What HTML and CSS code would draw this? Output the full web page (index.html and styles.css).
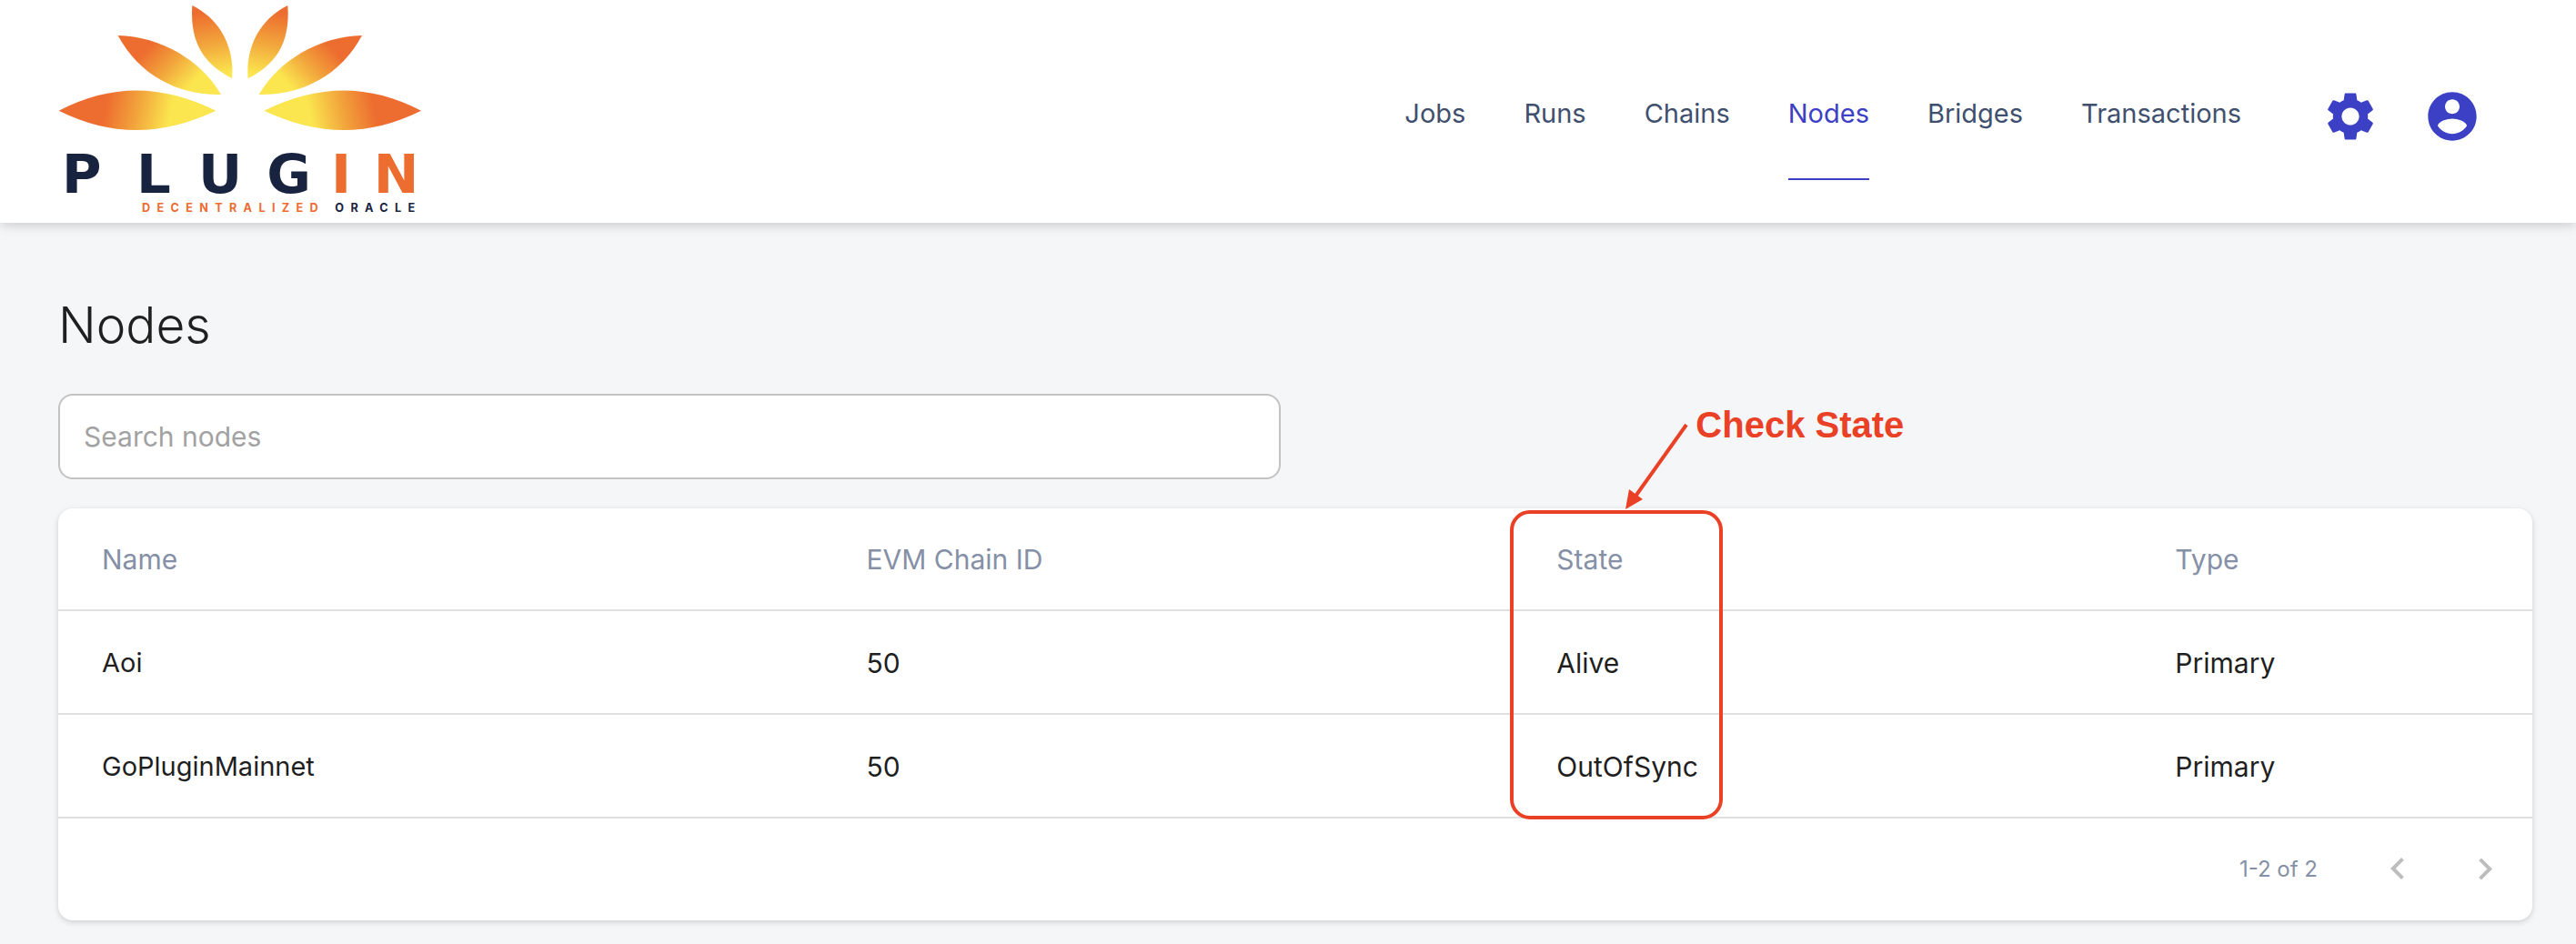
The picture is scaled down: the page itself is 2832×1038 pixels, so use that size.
FILE: index.html
```html
<!DOCTYPE html>
<html lang="en">
<head>
<meta charset="utf-8">
<meta name="viewport" content="width=device-width, initial-scale=1">
<title>Nodes - Plugin Decentralized Oracle</title>
<link rel="stylesheet" href="styles.css">
</head>
<body>
<header class="header">
  <a class="logo" href="#" aria-label="Plugin Decentralized Oracle">
    <svg class="logo__art" viewBox="72 0 1200 714">
      <defs>
        <linearGradient id="petal-low" gradientUnits="userSpaceOnUse" x1="230" y1="340" x2="440" y2="385">
          <stop offset="0" stop-color="#ed6c2f"/><stop offset="0.5" stop-color="#f2a53c"/><stop offset="1" stop-color="#fbe64f"/>
        </linearGradient>
        <linearGradient id="petal-mid" gradientUnits="userSpaceOnUse" x1="365" y1="160" x2="500" y2="290">
          <stop offset="0" stop-color="#ed6c2f"/><stop offset="0.5" stop-color="#f2a53c"/><stop offset="1" stop-color="#fbe64f"/>
        </linearGradient>
        <linearGradient id="petal-top" gradientUnits="userSpaceOnUse" x1="550" y1="40" x2="590" y2="250">
          <stop offset="0" stop-color="#ed6c2f"/><stop offset="0.5" stop-color="#f2a53c"/><stop offset="1" stop-color="#fbe64f"/>
        </linearGradient>
        <g id="petals">
          <path fill="url(#petal-low)" d="M74 365C245 276 412 276 592 365C412 450 245 450 74 365Z"/>
          <path fill="url(#petal-mid)" d="M269 117C410 120 545 200 609 312C470 315 340 250 269 117Z"/>
          <path fill="url(#petal-top)" d="M514 18C600 60 655 150 645 259C560 215 505 150 514 18Z"/>
        </g>
      </defs>
      <use href="#petals"/>
      <use href="#petals" transform="translate(1343 0) scale(-1 1)"/>
      <text class="logo__word" y="635"><tspan x="84 330 534 760">PLUG</tspan><tspan class="logo__accent" x="972 1112">IN</tspan></text>
      <text class="logo__tagline" y="699"><tspan class="logo__accent" x="348">DECENTRALIZED</tspan><tspan x="985">ORACLE</tspan></text>
    </svg>
  </a>
  <nav class="nav" aria-label="Main">
    <a class="nav__link" href="#">Jobs</a>
    <a class="nav__link" href="#">Runs</a>
    <a class="nav__link" href="#">Chains</a>
    <a class="nav__link nav__link--active" href="#" aria-current="page">Nodes</a>
    <a class="nav__link" href="#">Bridges</a>
    <a class="nav__link" href="#">Transactions</a>
  </nav>
  <div class="actions">
    <button class="icon-button" type="button" aria-label="Settings">
      <svg class="icon" viewBox="0 0 24 24"><path d="M19.14 12.94c.04-.3.06-.61.06-.94 0-.32-.02-.64-.07-.94l2.03-1.58c.18-.14.23-.41.12-.61l-1.92-3.32c-.12-.22-.37-.29-.59-.22l-2.39.96c-.5-.38-1.03-.7-1.62-.94l-.36-2.54c-.04-.24-.24-.41-.48-.41h-3.84c-.24 0-.43.17-.47.41l-.36 2.54c-.59.24-1.13.57-1.62.94l-2.39-.96c-.22-.08-.47 0-.59.22L2.74 8.87c-.12.21-.08.47.12.61l2.03 1.58c-.05.3-.09.63-.09.94s.02.64.07.94l-2.03 1.58c-.18.14-.23.41-.12.61l1.92 3.32c.12.22.37.29.59.22l2.39-.96c.5.38 1.03.7 1.62.94l.36 2.54c.05.24.24.41.48.41h3.84c.24 0 .44-.17.47-.41l.36-2.54c.59-.24 1.13-.56 1.62-.94l2.39.96c.22.08.47 0 .59-.22l1.92-3.32c.12-.22.07-.47-.12-.61l-2.01-1.58zM12 15.6c-1.98 0-3.6-1.62-3.6-3.6s1.62-3.6 3.6-3.6 3.6 1.62 3.6 3.6-1.62 3.6-3.6 3.6z"/></svg>
    </button>
    <button class="icon-button" type="button" aria-label="Account">
      <svg class="icon" viewBox="0 0 24 24"><path d="M12 2C6.48 2 2 6.48 2 12s4.48 10 10 10 10-4.48 10-10S17.52 2 12 2zm0 3c1.66 0 3 1.34 3 3s-1.34 3-3 3-3-1.34-3-3 1.34-3 3-3zm0 14.2c-2.5 0-4.71-1.28-6-3.22.03-1.99 4-3.08 6-3.08 1.99 0 5.97 1.09 6 3.08-1.29 1.94-3.5 3.22-6 3.22z"/></svg>
    </button>
  </div>
</header>

<main class="content">
  <h1 class="title">Nodes</h1>
  <input class="search" type="search" placeholder="Search nodes" aria-label="Search nodes">
  <section class="card">
    <table class="table">
      <colgroup><col class="col-name"><col class="col-chain"><col class="col-state"><col></colgroup>
      <thead>
        <tr>
          <th scope="col">Name</th>
          <th scope="col">EVM Chain ID</th>
          <th scope="col" class="state">State
            <div class="callout">
              <svg class="callout__arrow" viewBox="0 0 72 96" aria-hidden="true"><path d="M68 2L11 82" fill="none" stroke="#ea4025" stroke-width="4"/><path d="M1 95L5 73L20 84Z" fill="#ea4025"/></svg>
              <span class="callout__label">Check State</span>
            </div>
          </th>
          <th scope="col">Type</th>
        </tr>
      </thead>
      <tbody>
        <tr>
          <td><a class="node-link" href="#">Aoi</a></td>
          <td>50</td>
          <td>Alive</td>
          <td>Primary</td>
        </tr>
        <tr>
          <td><a class="node-link" href="#">GoPluginMainnet</a></td>
          <td>50</td>
          <td>OutOfSync</td>
          <td>Primary</td>
        </tr>
      </tbody>
    </table>
    <footer class="pagination">
      <span class="pagination__range">1-2 of 2</span>
      <button class="page-button" type="button" aria-label="Previous page" disabled>
        <svg class="page-button__icon" viewBox="0 0 24 24"><path d="M15.41 16.09l-4.58-4.59 4.58-4.59L14 5.5l-6 6 6 6z"/></svg>
      </button>
      <button class="page-button" type="button" aria-label="Next page" disabled>
        <svg class="page-button__icon" viewBox="0 0 24 24"><path d="M8.59 16.34l4.58-4.59-4.58-4.59L10 5.75l6 6-6 6z"/></svg>
      </button>
    </footer>
  </section>
</main>
</body>
</html>
```
FILE: styles.css
```css
* {
  box-sizing: border-box;
}

body {
  margin: 0;
  background: #f5f6f8;
  color: #1f1f1f;
  font-family: Inter, "Liberation Sans", sans-serif;
  font-size: 30px;
  line-height: 48px;
}

a {
  color: inherit;
  text-decoration: none;
}

button {
  border: 0;
  background: none;
  cursor: pointer;
}

/* Header */

.header {
  position: relative;
  display: flex;
  align-items: center;
  padding: 0 80px 0 64px;
  background: #fff;
  box-shadow: 0 4px 8px -2px rgba(0, 0, 0, 0.08), 0 6px 12px rgba(0, 0, 0, 0.06), 0 2px 20px rgba(0, 0, 0, 0.04);
}

.logo {
  margin-right: auto;
  padding-bottom: 7px;
}

.logo__art {
  display: block;
  width: 400px;
}

.logo__word {
  fill: #18233f;
  font-family: "DejaVu Sans", sans-serif;
  font-size: 178px;
  font-weight: 700;
}

.logo__tagline {
  fill: #18233f;
  font-size: 38px;
  font-weight: 700;
  letter-spacing: 22px;
}

.logo__accent {
  fill: #ed6c2f;
}

.nav {
  display: flex;
  gap: 64px;
  padding-top: 5px;
  margin-right: 64px;
  color: #3f506f;
  font-size: 29px;
}

.nav__link {
  padding: 49px 0 47px;
  border-bottom: 2px solid transparent;
}

.nav__link--active {
  border-color: #3c40c4;
  color: #3c40c4;
}

.actions {
  display: flex;
  padding-top: 10px;
}

.icon-button {
  padding: 24px;
}

.icon {
  display: block;
  width: 64px;
  height: 64px;
  fill: #3c40c4;
}

/* Page */

.content {
  padding: 64px 48px 28px 64px;
}

.title {
  margin: 12px 0 40px;
  font-size: 55px;
  font-weight: 300;
  line-height: 72px;
}

.search {
  display: block;
  width: calc(50% - 16px);
  height: 94px;
  margin-bottom: 32px;
  padding: 0 26px;
  border: 2px solid #c2c2c2;
  border-radius: 16px;
  background: #fff;
  font: inherit;
}

.search::placeholder {
  color: #a2a2a2;
}

.card {
  border-radius: 16px;
  background: #fff;
  box-shadow: 0 2px 6px rgba(0, 0, 0, 0.16);
}

/* Table */

.table {
  width: 100%;
  border-collapse: separate;
  border-spacing: 0;
  table-layout: fixed;
}

.col-name {
  width: 30.9%;
}

.col-chain {
  width: 27.9%;
}

.col-state {
  width: 25%;
}

.table th,
.table td {
  padding: 32px 24px 31px 48px;
  border-bottom: 2px solid #dfdfdf;
  text-align: left;
}

.table th {
  color: #8590a6;
  font-weight: 400;
}

.node-link {
  font-size: 29px;
}

/* Marked column */

.state {
  position: relative;
}

.callout {
  position: absolute;
  top: 2px;
  left: -3px;
  width: 234px;
  height: 340px;
  border: 4px solid #ea4025;
  border-radius: 22px;
  pointer-events: none;
}

.callout__arrow {
  position: absolute;
  left: 122px;
  bottom: 100%;
  width: 72px;
  height: 96px;
  margin-bottom: 4px;
}

.callout__label {
  position: absolute;
  left: 200px;
  bottom: 100%;
  padding-bottom: 74px;
  color: #ea4025;
  font: 700 40px/48px "Liberation Sans", Arial, sans-serif;
  white-space: nowrap;
}

/* Pagination */

.pagination {
  display: flex;
  align-items: center;
  justify-content: flex-end;
  padding: 8px 4px;
}

.pagination__range {
  margin-right: 40px;
  color: #8590a6;
  font-size: 24px;
}

.page-button {
  padding: 24px;
  cursor: default;
}

.page-button__icon {
  display: block;
  width: 48px;
  height: 48px;
  fill: #bdbdbd;
}
```
